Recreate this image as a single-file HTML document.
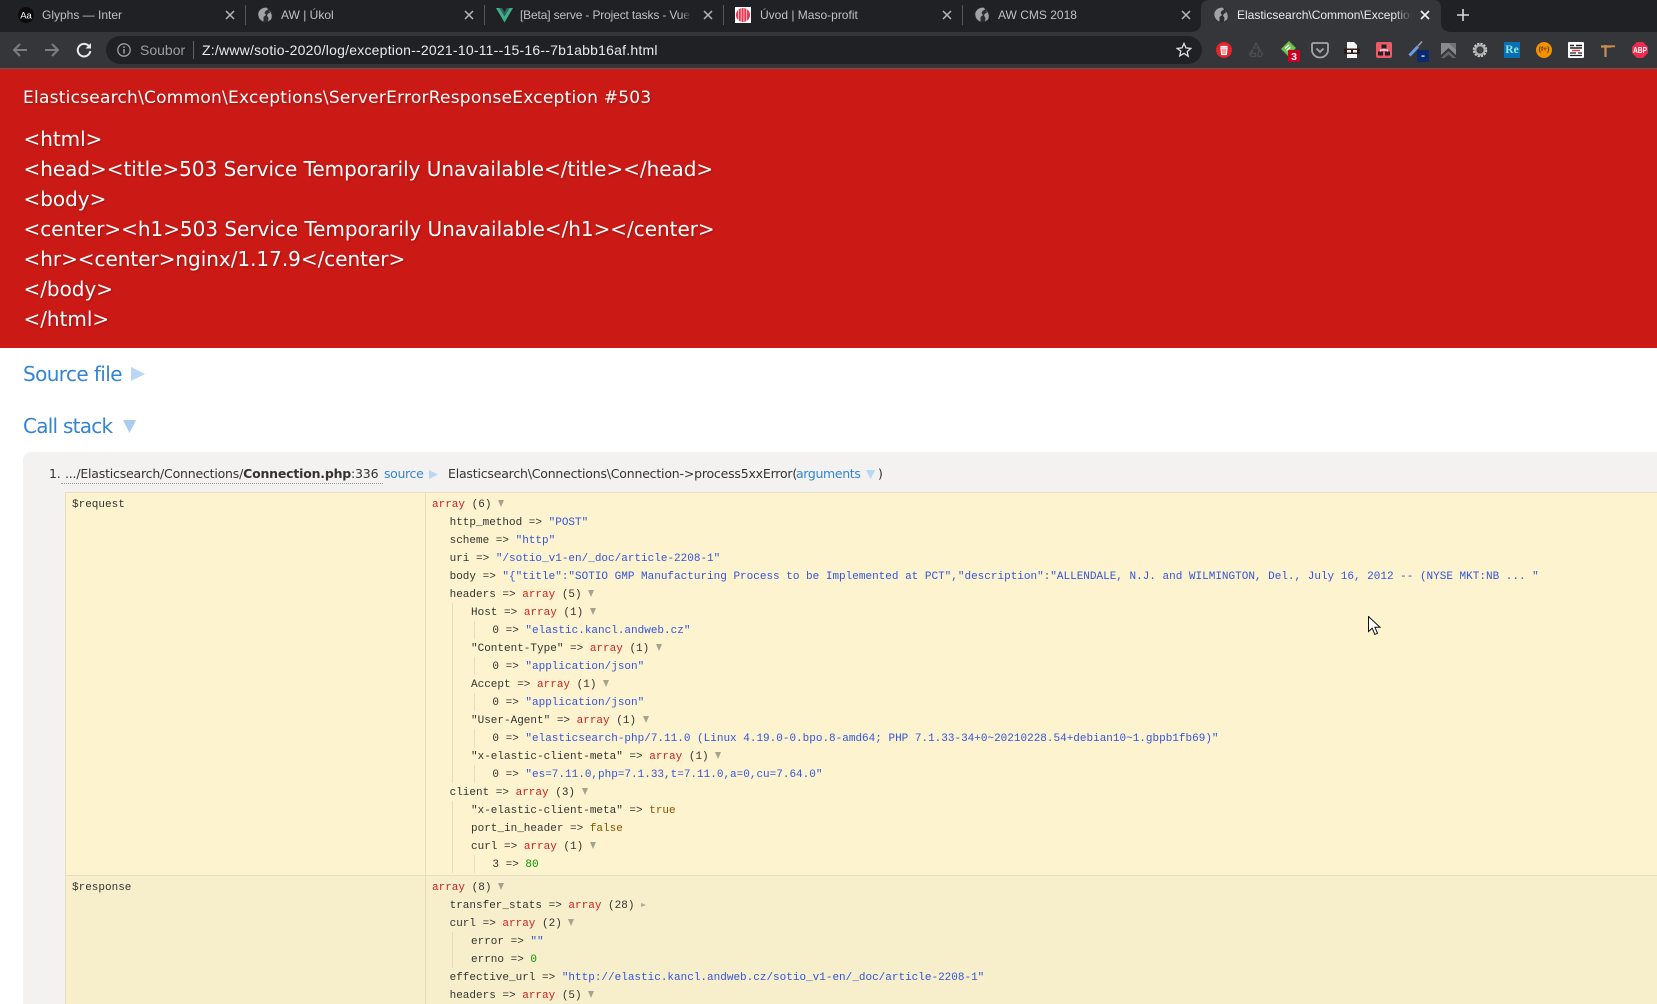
<!DOCTYPE html>
<html><head><meta charset="utf-8"><title>Elasticsearch\Common\Exceptions</title>
<style>
html,body{margin:0;padding:0;width:1657px;height:1004px;overflow:hidden;background:#fff}
*{box-sizing:border-box}
#page{position:relative;width:1657px;height:1004px;overflow:hidden;background:#fff}
.a{position:absolute}
#tabs{left:0;top:0;width:1657px;height:32px;background:#202124}
#bar{left:0;top:32px;width:1657px;height:36px;background:#35363a}
#line{left:0;top:68px;width:1657px;height:1px;background:#5a5b5e}
#omni{left:106px;top:36px;width:1096px;height:28px;border-radius:14px;background:#202124}
.t{position:absolute;top:7px;font:12px/16px "Liberation Sans",sans-serif;color:#bdc1c6;white-space:nowrap;overflow:hidden}
.x{position:absolute;top:10px;width:10px;height:10px}
.s{position:absolute;top:5px;width:1px;height:20px;background:#55565a}
#red{left:0;top:69px;width:1657px;height:279px;background:#cb1a16;color:#fff;font-family:"DejaVu Sans",sans-serif;text-shadow:1px 1px 2px rgba(0,0,0,.25)}
.h{position:absolute;left:23.5px;font-size:20px;line-height:30px;white-space:nowrap;letter-spacing:-.03px}
.blue{font:20px/30px "DejaVu Sans",sans-serif;color:#3484d2;white-space:nowrap}
#box{left:23px;top:452px;width:1640px;height:560px;background:#f3f2f1;border-radius:8px 0 0 0}
.st{font:12.5px/18px "DejaVu Sans",sans-serif;color:#333;white-space:nowrap;letter-spacing:-.2px}
.sl{letter-spacing:-.35px;color:#3484d2}
#tb1{left:65px;top:492px;width:1592px;height:384px;background:#fdf3ce;border-top:1px solid #e6dfbf;border-left:1px solid #e6dfbf}
#tb2{left:65px;top:875px;width:1592px;height:130px;background:#f7efcb;border-top:1px solid #e6dfbf;border-left:1px solid #e6dfbf}
.div{left:425px;width:1px;background:#e6dfbf}
.code{left:432px;font-family:"Liberation Mono",monospace;font-size:11px;color:#333}
.code div{height:18px;line-height:18px;white-space:pre}
.v{position:absolute;font:11px/18px "Liberation Mono",monospace;color:#333;white-space:pre}
.l1{padding-left:17.6px}.l2{padding-left:39px}.l3{padding-left:60.4px}
.r{color:#c22}.b{color:#35d}.g{color:#090}.o{color:#850}
i.d,i.f{display:inline-block;vertical-align:0;margin-left:6.5px}
i.d{border-left:3px solid transparent;border-right:3px solid transparent;border-top:7px solid #a5a28f}
i.f{border-top:2.5px solid transparent;border-bottom:2.5px solid transparent;border-left:5px solid #b0ad9a;margin-bottom:1px}
.g1{background:#e4ddbd;width:1px}
</style></head><body>
<div id="page">
<div class="a" id="tabs"></div>
<div class="a" id="bar"></div>
<div class="a" id="line"></div>
<div class="a" id="omni"></div>

<svg class="a" style="left:1190px;top:0" width="262" height="32"><path d="M0 32Q11 32 11 22V8Q11 0 19 0H243Q251 0 251 8V22Q251 32 262 32Z" fill="#35363a"/></svg>

<svg class="a" style="left:18px;top:7px" width="16" height="16"><circle cx="8" cy="8" r="8" fill="#0b0b0c"/><text x="8" y="11.5" text-anchor="middle" font-family="Liberation Sans" font-size="9.5" fill="#fff">Aa</text></svg>
<div class="t" style="left:42px;width:170px">Glyphs — Inter</div>
<svg class="x" style="left:225px"><use href="#cl"/></svg>
<div class="s" style="left:245px"></div>
<svg class="a" style="left:257px;top:7px" width="16" height="16"><use href="#gl"/></svg>
<div class="t" style="left:281px;width:170px">AW | Úkol</div>
<svg class="x" style="left:464px"><use href="#cl"/></svg>
<div class="s" style="left:484px"></div>
<svg class="a" style="left:496px;top:8px" width="17" height="15"><path d="M0 0H3.6L8.5 8.2 13.4 0H17L8.5 14.5Z" fill="#3fae85"/><path d="M3.6 0H6.2L8.5 4 10.8 0H13.4L8.5 8.2Z" fill="#2f5f63"/></svg>
<div class="t" style="left:520px;width:171px;letter-spacing:-.15px;-webkit-mask-image:linear-gradient(90deg,#000 94%,transparent)">[Beta] serve - Project tasks - Vue</div>
<svg class="x" style="left:703px"><use href="#cl"/></svg>
<div class="s" style="left:723px"></div>
<svg class="a" style="left:735px;top:7px" width="16" height="16"><rect width="16" height="16" fill="#fff"/><circle cx="8" cy="8" r="7" fill="#e5384f"/><path d="M3.5 1V15M6.2 1V15M8.9 1V15M11.6 1V15" stroke="#fff" stroke-width=".9" opacity=".75"/></svg>
<div class="t" style="left:760px;width:170px">Úvod | Maso-profit</div>
<svg class="x" style="left:942px"><use href="#cl"/></svg>
<div class="s" style="left:962px"></div>
<svg class="a" style="left:974px;top:7px" width="16" height="16"><use href="#gl"/></svg>
<div class="t" style="left:998px;width:170px">AW CMS 2018</div>
<svg class="x" style="left:1181px"><use href="#cl"/></svg>
<svg class="a" style="left:1213px;top:7px" width="16" height="16"><use href="#gl"/></svg>
<div class="t" style="left:1237px;width:175px;color:#e8eaed;-webkit-mask-image:linear-gradient(90deg,#000 90%,transparent)">Elasticsearch\Common\Exceptions\ServerError</div>
<svg class="x" style="left:1420px"><use href="#cw"/></svg>
<svg class="a" style="left:1457px;top:9px" width="12" height="12"><path d="M6 0V12M0 6H12" stroke="#d5d7da" stroke-width="1.6"/></svg>

<svg width="0" height="0" style="position:absolute">
<defs>
<g id="cl"><path d="M1 1L9 9M9 1L1 9" stroke="#b4b7ba" stroke-width="1.5" fill="none"/></g>
<g id="cw"><path d="M1 1L9 9M9 1L1 9" stroke="#eef0f2" stroke-width="1.6" fill="none"/></g>
<g id="gl"><circle cx="8" cy="8" r="7.5" fill="#2c2d30"/><path d="M1.500 5.500A7.500 7.500 0 0 1 10 .800L11 2.500 8.500 4 7.500 6 9 8 6.500 10 6.500 14.500A7.500 7.500 0 0 1 1.500 5.500ZM12 3.500A7.500 7.500 0 0 1 14 12.500L11 14.500 11.500 11 10 8.500 11 6.500 13 6Z" fill="#9fa2a6"/></g>
</defs>
</svg>

<svg class="a" style="left:12px;top:42px" width="16" height="16"><path d="M15 8H2M8 2L2 8l6 6" stroke="#7b7d80" stroke-width="2" fill="none"/></svg>
<svg class="a" style="left:44px;top:42px" width="16" height="16"><path d="M1 8H14M8 2l6 6-6 6" stroke="#7b7d80" stroke-width="2" fill="none"/></svg>
<svg class="a" style="left:76px;top:42px" width="16" height="16"><path d="M13 4.2A6.3 6.3 0 1 0 14.3 9" stroke="#e8eaed" stroke-width="2" fill="none"/><path d="M9.5 6.5H15V1Z" fill="#e8eaed"/></svg>
<svg class="a" style="left:117px;top:43px" width="14" height="14"><circle cx="7" cy="7" r="6.2" stroke="#9aa0a6" stroke-width="1.3" fill="none"/><path d="M7 6V10.5M7 3.4V5" stroke="#9aa0a6" stroke-width="1.5"/></svg>
<div class="a" style="left:140px;top:42px;font:14px/16px 'Liberation Sans',sans-serif;color:#9aa0a6">Soubor</div>
<div class="a" style="left:193px;top:41px;width:1px;height:18px;background:#5f6368"></div>
<div class="a" style="left:202px;top:42px;font:14px/16px 'Liberation Sans',sans-serif;letter-spacing:.22px;color:#e8eaed;white-space:nowrap">Z:/www/sotio-2020/log/exception--2021-10-11--15-16--7b1abb16af.html</div>
<svg class="a" style="left:1176px;top:42px" width="16" height="16"><path d="M8 1.5l2 4.4 4.8.5-3.6 3.2 1 4.7L8 11.4 3.800 13.800l1-4.700L1.200 6.400 6 5.900Z" stroke="#dfe1e5" stroke-width="1.300" fill="none"/></svg>

<svg class="a" style="left:1214px;top:40px" width="20" height="20"><circle cx="10" cy="10" r="8" fill="#e3242b"/><path d="M7 8h6l-.6 6.500H7.600ZM6.500 6.500h7" stroke="#fff" stroke-width="1.200" fill="#f4a0a0"/></svg>
<svg class="a" style="left:1248px;top:42px" width="16" height="16"><path d="M8 1l2.500 4-1.500 1H5.500ZM11 6.500l3.500 5.500-1.500 2.500H10V12ZM4.500 7.500L1.500 12 3 14.500h4.500V11.500H3.500Z" stroke="#4c4d50" stroke-width="1.300" fill="none"/></svg>
<svg class="a" style="left:1279px;top:40px" width="26" height="26"><path d="M10 1L17 8 9 16 2 9Z" fill="#6cc24a"/><path d="M6 8.500L10 5M7.500 10.500L11.500 7" stroke="#fff" stroke-width="1.300"/><rect x="9" y="10" width="12" height="12" rx="1" fill="#cc0022"/><text x="15" y="20" text-anchor="middle" font-family="Liberation Sans" font-weight="700" font-size="10.500" fill="#fff">3</text></svg>
<svg class="a" style="left:1311px;top:41px" width="18" height="18"><path d="M2.500 2H15.500A1.500 1.500 0 0 1 17 3.500V9A8 7.500 0 0 1 1 9V3.500A1.500 1.500 0 0 1 2.500 2Z" fill="none" stroke="#a4a6a8" stroke-width="1.800"/><path d="M5.500 7.500L9 11l3.500-3.500" stroke="#a4a6a8" stroke-width="1.800" fill="none"/></svg>
<svg class="a" style="left:1344px;top:42px" width="16" height="17"><path d="M3 0H10L13 3V7H3ZM3 12H13V16H3Z" fill="#f4f4f4"/><rect x="0" y="6.500" width="16" height="5.500" rx="1" fill="#2c1a18"/><rect x="3" y="8" width="4" height="2.500" fill="#f4f4f4"/><rect x="9" y="8" width="4" height="2.500" fill="#f4f4f4"/></svg>
<svg class="a" style="left:1376px;top:42px" width="16" height="16"><rect width="16" height="16" rx="2" fill="#ef5a68"/><rect x="5.500" y="2.500" width="5" height="4" fill="#202124"/><rect x="2" y="9.500" width="5" height="4" fill="#202124"/><rect x="9" y="9.500" width="5" height="4" fill="#202124"/><path d="M8 6.500V8M4.500 9.500V8H11.500V9.500" stroke="#fff" stroke-width="1" fill="none"/></svg>
<svg class="a" style="left:1408px;top:40px" width="26" height="24"><path d="M1.500 15.500L10 6.500" stroke="#6d9fe0" stroke-width="3"/><path d="M10 6L14 1.500" stroke="#9aa0a6" stroke-width="1.600"/><rect x="9" y="10" width="12" height="12" rx="1" fill="#0c2a6e"/><rect x="13.500" y="15.500" width="3" height="1.200" fill="#fff"/></svg>
<svg class="a" style="left:1441px;top:42px" width="15" height="16"><path d="M0 1H15V13L7.500 6 0 13Z" fill="#8a8b8c"/><path d="M0 1H15V8L7.500 1Z" fill="#6b6c6e" opacity=".8"/><path d="M0 16L7.500 9 15 16 11.500 16 7.500 12.500 3.500 16Z" fill="#67686a"/></svg>
<svg class="a" style="left:1472px;top:42px" width="16" height="16"><circle cx="8" cy="8" r="5.500" fill="none" stroke="#c9c9c9" stroke-width="3.500" stroke-dasharray="2 .9"/><circle cx="8" cy="8" r="4.600" fill="none" stroke="#b0b0b0" stroke-width="2"/><circle cx="8" cy="8" r="2.300" fill="#444"/></svg>
<div class="a" style="left:1504px;top:42px;width:16px;height:16px;background:#0a70b5;color:#8fe8d8;font:700 11.500px/16px 'Liberation Serif',serif;text-align:center">Re</div>
<div class="a" style="left:1536px;top:42px;width:16px;height:16px;border-radius:8px;background:#f39200;color:#5c3400;font:700 6.500px/16px 'Liberation Sans',sans-serif;text-align:center">{f+}</div>
<svg class="a" style="left:1568px;top:42px" width="16" height="16"><rect width="16" height="16" rx="1" fill="#fff"/><path d="M2 3.500H6M8 3.500H14M2 6H14" stroke="#222" stroke-width="1.400"/><path d="M4 8.500H12" stroke="#e33" stroke-width="1.400"/><path d="M2 11H8M10 11H14M2 13.500H14" stroke="#222" stroke-width="1.200"/></svg>
<svg class="a" style="left:1600px;top:42px" width="16" height="16"><path d="M5.500 15V3M1 4.500H15" stroke="#c98e52" stroke-width="2.200" fill="none"/><path d="M11 5.500H15" stroke="#6e4622" stroke-width="1"/></svg>
<svg class="a" style="left:1632px;top:42px" width="16" height="16"><path d="M5 0H11L16 5V11L11 16H5L0 11V5Z" fill="#ee2a4f"/><text x="8" y="11.200" text-anchor="middle" font-family="Liberation Sans" font-weight="700" font-size="8.500" fill="#fff" textLength="14" lengthAdjust="spacingAndGlyphs">ABP</text></svg>

<div class="a" id="red">
<div class="a" style="left:23px;top:18px;font-size:17px;line-height:22px;white-space:nowrap;letter-spacing:.24px">Elasticsearch\Common\Exceptions\ServerErrorResponseException #503</div>
<div class="h" style="top:55px">&lt;html&gt;</div>
<div class="h" style="top:85px">&lt;head&gt;&lt;title&gt;503 Service Temporarily Unavailable&lt;/title&gt;&lt;/head&gt;</div>
<div class="h" style="top:115px">&lt;body&gt;</div>
<div class="h" style="top:145px">&lt;center&gt;&lt;h1&gt;503 Service Temporarily Unavailable&lt;/h1&gt;&lt;/center&gt;</div>
<div class="h" style="top:175px">&lt;hr&gt;&lt;center&gt;nginx/1.17.9&lt;/center&gt;</div>
<div class="h" style="top:205px">&lt;/body&gt;</div>
<div class="h" style="top:235px">&lt;/html&gt;</div>
</div>

<div class="a blue" style="left:23px;top:359px;letter-spacing:-.6px">Source file</div>
<svg class="a" style="left:131px;top:367px" width="14" height="14"><path d="M0 0L14 7 0 14Z" fill="#b9d7f3"/></svg>
<div class="a blue" style="left:23px;top:411px;letter-spacing:-.75px">Call stack</div>
<svg class="a" style="left:123px;top:420px" width="13" height="13"><path d="M0 0H13L6.500 13Z" fill="#a9cdf0"/></svg>

<div class="a" id="box"></div>
<div class="a st" style="left:49px;top:465px">1.</div>
<div class="a st" style="left:65px;top:465px">.../Elasticsearch/Connections/<b>Connection.php</b>:336</div>
<div class="a" style="left:61px;top:483px;width:322px;border-top:1px dotted #999"></div>
<div class="a st sl" style="left:384px;top:465px">source</div>
<svg class="a" style="left:429px;top:470px" width="9" height="9"><path d="M0 0L9 4.500 0 9Z" fill="#b9d7f3"/></svg>
<div class="a st" style="left:448px;top:465px">Elasticsearch\Connections\Connection-&gt;process5xxError(</div>
<div class="a st sl" style="left:796px;top:465px">arguments</div>
<svg class="a" style="left:866px;top:470px" width="9" height="9"><path d="M0 0H9L4.500 9Z" fill="#b9d7f3"/></svg>
<div class="a st" style="left:878px;top:465px">)</div>

<div class="a" id="tb1"></div>
<div class="a" id="tb2"></div>
<div class="a div" style="top:492px;height:512px"></div>

<div class="a g1" style="left:452px;top:603px;height:180px"></div>
<div class="a g1" style="left:474px;top:621px;height:18px"></div>
<div class="a g1" style="left:474px;top:657px;height:18px"></div>
<div class="a g1" style="left:474px;top:693px;height:18px"></div>
<div class="a g1" style="left:474px;top:729px;height:18px"></div>
<div class="a g1" style="left:474px;top:765px;height:18px"></div>
<div class="a g1" style="left:452px;top:801px;height:72px"></div>
<div class="a g1" style="left:474px;top:855px;height:18px"></div>
<div class="a g1" style="left:452px;top:932px;height:36px"></div>

<div class="v" style="left:72px;top:496px">$request</div>
<div class="v" style="left:72px;top:879px">$response</div>

<div class="a code" style="top:496px"><div><span class="r">array</span> (6)<i class="d"></i></div><div class="l1">http_method =&gt; <span class="b">"POST"</span></div><div class="l1">scheme =&gt; <span class="b">"http"</span></div><div class="l1">uri =&gt; <span class="b">"/sotio_v1-en/_doc/article-2208-1"</span></div><div class="l1">body =&gt; <span class="b">"{"title":"SOTIO GMP Manufacturing Process to be Implemented at PCT","description":"ALLENDALE, N.J. and WILMINGTON, Del., July 16, 2012 -- (NYSE MKT:NB ... "</span></div><div class="l1">headers =&gt; <span class="r">array</span> (5)<i class="d"></i></div><div class="l2">Host =&gt; <span class="r">array</span> (1)<i class="d"></i></div><div class="l3">0 =&gt; <span class="b">"elastic.kancl.andweb.cz"</span></div><div class="l2">"Content-Type" =&gt; <span class="r">array</span> (1)<i class="d"></i></div><div class="l3">0 =&gt; <span class="b">"application/json"</span></div><div class="l2">Accept =&gt; <span class="r">array</span> (1)<i class="d"></i></div><div class="l3">0 =&gt; <span class="b">"application/json"</span></div><div class="l2">"User-Agent" =&gt; <span class="r">array</span> (1)<i class="d"></i></div><div class="l3">0 =&gt; <span class="b">"elasticsearch-php/7.11.0 (Linux 4.19.0-0.bpo.8-amd64; PHP 7.1.33-34+0~20210228.54+debian10~1.gbpb1fb69)"</span></div><div class="l2">"x-elastic-client-meta" =&gt; <span class="r">array</span> (1)<i class="d"></i></div><div class="l3">0 =&gt; <span class="b">"es=7.11.0,php=7.1.33,t=7.11.0,a=0,cu=7.64.0"</span></div><div class="l1">client =&gt; <span class="r">array</span> (3)<i class="d"></i></div><div class="l2">"x-elastic-client-meta" =&gt; <span class="o">true</span></div><div class="l2">port_in_header =&gt; <span class="o">false</span></div><div class="l2">curl =&gt; <span class="r">array</span> (1)<i class="d"></i></div><div class="l3">3 =&gt; <span class="g">80</span></div></div>

<div class="a code" style="top:879px"><div><span class="r">array</span> (8)<i class="d"></i></div><div class="l1">transfer_stats =&gt; <span class="r">array</span> (28)<i class="f"></i></div><div class="l1">curl =&gt; <span class="r">array</span> (2)<i class="d"></i></div><div class="l2">error =&gt; <span class="b">""</span></div><div class="l2">errno =&gt; <span class="g">0</span></div><div class="l1">effective_url =&gt; <span class="b">"http://elastic.kancl.andweb.cz/sotio_v1-en/_doc/article-2208-1"</span></div><div class="l1">headers =&gt; <span class="r">array</span> (5)<i class="d"></i></div></div>

<svg class="a" style="left:1368px;top:616px" width="14" height="20"><path d="M.5.500V15.500L4.200 12.200 6.800 18.500 9.500 17.300 6.900 11.200H12Z" fill="#fff" stroke="#111" stroke-width="1"/></svg>
</div>
</body></html>
